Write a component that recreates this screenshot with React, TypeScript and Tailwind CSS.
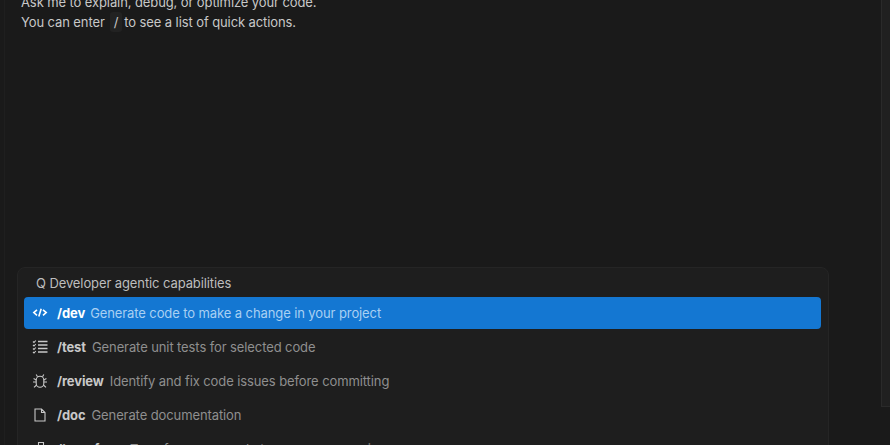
import type { ReactNode } from 'react'

type Action = { icon: ReactNode; cmd: string; text: string; active?: boolean }

const CodeIcon = () => (
  <svg width="16" height="16" viewBox="0 0 16 16" fill="none" stroke="currentColor" strokeWidth="1.6">
    <path d="M5 4.8 1.8 7.6 5 10.4M11 4.8l3.2 2.8-3.2 2.8M9.2 3.8 6.8 11.4" />
  </svg>
)

const TestIcon = () => (
  <svg width="16" height="16" viewBox="0 0 16 16" fill="none" stroke="currentColor" strokeWidth="1.1">
    <path d="M1 2.5 2 3.5 3.8 1.5M1 6 2 7 3.8 5M1 9.5 2 10.5 3.8 8.5M1 13 2 14 3.8 12" />
    <path strokeWidth="1.3" d="M6 2.5h9.5M6 6h9.5M6 9.5h9.5M6 13h9.5" />
  </svg>
)

const BugIcon = () => (
  <svg width="16" height="16" viewBox="0 0 16 16" fill="none" stroke="currentColor" strokeWidth="1.1">
    <path d="M4.2 7a3.8 3.8 0 0 1 7.6 0v3.5a3.8 3.8 0 0 1-7.6 0z" />
    <path d="M5.5 3.8 4.2 1.5M10.5 3.8l1.3-2.3M4.2 7 1.6 5.6M11.8 7l2.6-1.4M4.2 9H1M11.8 9H15M4.6 12 2 14.4M11.4 12l2.6 2.4" />
  </svg>
)

const DocIcon = () => (
  <svg width="16" height="16" viewBox="0 0 16 16" fill="none" stroke="currentColor" strokeWidth="1.1">
    <path d="M3 2h6.5l3.5 3.5V14H3zM9.5 2v3.5H13" />
  </svg>
)

const TransformIcon = () => (
  <svg width="16" height="16" viewBox="0 0 16 16" fill="none" stroke="currentColor" strokeWidth="1.1">
    <path d="M6.5 1.5h5v5h-5zM1.5 8.5h5v5h-5zM8.5 8.5h5v5h-5z" />
  </svg>
)

const actions: Action[] = [
  { icon: <CodeIcon />, cmd: '/dev', text: 'Generate code to make a change in your project', active: true },
  { icon: <TestIcon />, cmd: '/test', text: 'Generate unit tests for selected code' },
  { icon: <BugIcon />, cmd: '/review', text: 'Identify and fix code issues before committing' },
  { icon: <DocIcon />, cmd: '/doc', text: 'Generate documentation' },
  { icon: <TransformIcon />, cmd: '/transform', text: 'Transform your code to use newer versions' },
]

export default function App() {
  return (
    <div className="flex h-[445px] w-[890px] overflow-hidden bg-[#1a1a1a] font-['Inter',sans-serif] text-[13px] leading-[20px] tracking-[-0.1px] text-[#c8c8c8]">
      <div className="ml-[4px] w-[877px] shrink-0 border-l border-[#1f1f1f]">
        <div className="-mt-[8px] pl-[16px]">
          <p>Ask me to explain, debug, or optimize your code.</p>
          <p className="flex items-center">
            You can enter
            <span className="ml-[5px] mr-[2px] rounded-[3px] bg-[#222222] px-[4px]">/</span>
            to see a list of quick actions.
          </p>
        </div>
        <div className="ml-[12px] mt-[235px] w-[812px] rounded-t-[8px] border border-[#252525] bg-[#1e1e1e] pl-[6px] pr-[7px]">
          <div className="flex h-[29px] items-center pl-[12px] pt-[1px] text-[#bdbdbd]">Q Developer agentic capabilities</div>
          <div className="flex flex-col gap-[2px]">
            {actions.map((a) => (
              <div
                key={a.cmd}
                className={
                  a.active
                    ? 'flex h-[32px] items-center rounded-[4px] bg-[#1477d2] pl-[8px] text-white'
                    : 'flex h-[32px] items-center rounded-[4px] pl-[8px] text-[#c8c8c8]'
                }
              >
                <span className="flex w-[25px] shrink-0">{a.icon}</span>
                <span className="font-bold">{a.cmd}</span>
                <span className={a.active ? 'ml-[5px] text-[#a9d0f2]' : 'ml-[6px] text-[#8f8f8f]'}>{a.text}</span>
              </div>
            ))}
          </div>
        </div>
      </div>
      <div className="h-[407px] w-[9px] border-b border-l border-[#2a2a2a] bg-[#202020]" />
    </div>
  )
}
